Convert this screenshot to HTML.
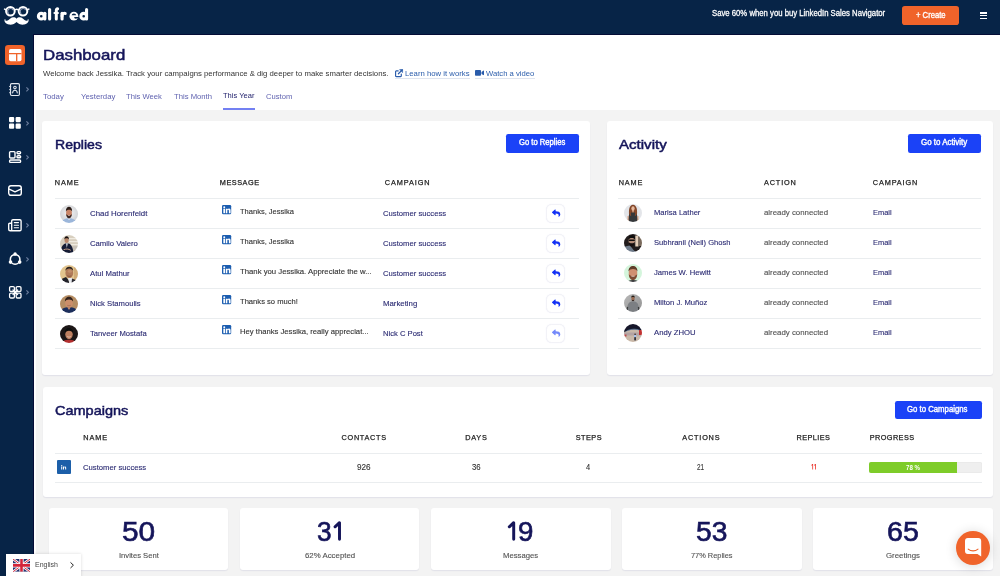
<!DOCTYPE html>
<html>
<head>
<meta charset="utf-8">
<title>Dashboard</title>
<style>
*{box-sizing:border-box;margin:0;padding:0}
html,body{width:1000px;height:576px;overflow:hidden}
body{font-family:"Liberation Sans",sans-serif;background:#f3f3f3;position:relative;color:#333}
.abs{position:absolute}
svg{position:absolute;overflow:visible}
.t{position:absolute;white-space:nowrap;line-height:1;transform-origin:0 50%}
#topbar{left:0;top:0;width:1000px;height:35px;background:#072447}
#sidebar{left:0;top:0;width:34px;height:576px;background:#072447}
#head{left:34px;top:35px;width:966px;height:74.8px;background:#fff}
.card{position:absolute;background:#fff;border-radius:3px;box-shadow:0 1px 1.2px rgba(90,90,160,.12)}
.btn{position:absolute;background:#1b42f7;border-radius:2.2px}
.ln{position:absolute;height:1px;background:#eaedef}
.rb{position:absolute;width:18.5px;height:18.9px;border:1px solid #f2f2f7;border-radius:5.5px;background:#fff;box-shadow:0 0 1px rgba(80,90,200,.10)}
.ul{position:absolute;height:1px;background:#dfe5f0}
</style>
</head>
<body>
<div id="head" class="abs"></div>
<div class="abs" style="left:34px;top:35px;width:2px;height:541px;background:#fdfdfd"></div>
<div id="topbar" class="abs"></div>
<div id="sidebar" class="abs"></div>

<div class="abs" style="left:33.2px;top:34.100px;width:967px;height:.9px;background:#040c36"></div>
<div class="abs" style="left:33.200px;top:34.100px;width:.9px;height:542px;background:#040c36"></div>
<svg style="left:0;top:0" width="100" height="35" viewBox="0 0 100 35">
<g fill="none" stroke="#fff" stroke-width="2">
<circle cx="10.4" cy="11.2" r="4.300"/><circle cx="23" cy="11.2" r="4.300"/>
<path d="M15.1 10c.9-.8 2.300-.8 3.200 0" stroke-width="1.5"/>
<path d="M6 9.800L4.600 9.100M27.400 9.800L28.800 9.100" stroke-width="1.6" stroke-linecap="round"/>
</g>
<g fill="none" stroke="#8d9cb5" stroke-width="1.200" stroke-linecap="round"><path d="M8.300 13.300a2.900 2.900 0 1 1 4.600-3.700"/><path d="M20.900 13.300a2.900 2.900 0 1 1 4.600-3.700"/></g>
<path fill="#fff" d="M16.550 18.700c-1.500-1.700-4.400-1.800-6.200-.2-1.300 1.200-2.300 2.300-3.700 2.300-1 0-1.500-.6-1.300-1.300.1-.4-.4-.6-.6-.2-1 2.200 1 4.800 4.300 5.300 3 .4 5.900-.9 7.500-2.700 1.600 1.800 4.500 3.100 7.500 2.700 3.300-.5 5.300-3.100 4.300-5.300-.2-.4-.7-.2-.6.200.2.700-.3 1.300-1.300 1.300-1.400 0-2.400-1.100-3.700-2.300-1.800-1.600-4.700-1.500-6.200.200z"/>
<g fill="none" stroke="#fff" stroke-width="3.1" stroke-linecap="round" stroke-linejoin="round">
<circle cx="41.250" cy="16.200" r="2.850"/><path d="M44.850 13.300V19.050"/>
<path d="M49.600 9.550V19.050"/>
<path d="M56.300 19.050V10.800c0-1.500.700-2.150 1.350-2.150" stroke-width="3"/><path d="M54.500 13H57.900" stroke-width="2.200"/>
<path d="M62.050 13.300V19.050"/><path d="M62.050 15.900c0-1.800 1.400-2.800 3.200-2.500" stroke-width="3"/>
<circle cx="73.900" cy="16.150" r="4.450" fill="#fff" stroke="none"/><path d="M71.700 15.300a2.200 1.900 0 0 1 4.400 0z" fill="#072447" stroke="none"/><path d="M74.300 17.100H78.800V18.600L76.700 18.500Q75.200 18.900 74.300 18.100z" fill="#072447" stroke="none"/>
<circle cx="83.700" cy="16.200" r="2.850"/><path d="M86.550 9.550V19.050"/>
</g></svg>
<div class="abs" style="left:5px;top:45.300px;width:19.8px;height:19.500px;border-radius:3.200px;background:#f0632a"></div>
<svg style="left:8.7px;top:49px" width="12.5" height="12.3" viewBox="0 0 12.5 12.300"><rect width="12.5" height="12.300" rx="1.7" fill="#fff"/><path d="M0 4.700H12.5M7.700 4.700V12.300" stroke="#f0632a" stroke-width="1.300"/></svg>
<svg style="left:9px;top:82.700px" width="12" height="13.2" viewBox="0 0 12 13.2" fill="none" stroke="#e3e7ee" stroke-width="1.150" stroke-linecap="round" stroke-linejoin="round"><rect x="1.500" y=".6" width="8.900" height="11.900" rx="1.200"/><path d="M.5 3.500H1.800M.5 6.600H1.800M.5 9.700H1.800" stroke-width=".9"/><circle cx="5.950" cy="4.600" r="1.300" stroke-width="1.050"/><path d="M3.600 9.900c.200-1.700 1.100-2.600 2.350-2.600s2.150.9 2.350 2.600" stroke-width="1.050"/></svg>
<svg style="left:26px;top:86.7px" width="2.8" height="4.6" viewBox="0 0 2.8 4.6" fill="none" stroke="#6a7c9c" stroke-width="1.150"><path d="M.4 .3L2.4 2.3L.4 4.300"/></svg>
<svg style="left:9px;top:117.2px" width="11.800" height="11.800" viewBox="0 0 11.800 11.800" fill="#fff"><rect width="5.200" height="5.200" rx="1.100"/><rect x="6.600" width="5.200" height="5.200" rx="1.100"/><rect y="6.600" width="5.200" height="5.200" rx="1.100"/><rect x="6.600" y="6.600" width="5.200" height="5.200" rx="1.100"/></svg>
<svg style="left:26px;top:120.7px" width="2.8" height="4.6" viewBox="0 0 2.8 4.6" fill="none" stroke="#6a7c9c" stroke-width="1.150"><path d="M.4 .3L2.4 2.3L.4 4.300"/></svg>
<svg style="left:9px;top:151px" width="12.200" height="12" viewBox="0 0 12.200 12" fill="none" stroke="#fff" stroke-linecap="round" stroke-linejoin="round" stroke-width="1.400"><rect x=".6" y=".6" width="5.400" height="6.400" rx=".9"/><rect x="8" y=".6" width="3.600" height="2.100" rx=".9"/><rect x="8" y="4.700" width="3.600" height="2.100" rx=".9"/><rect x=".6" y="9" width="11" height="2.400" rx=".9"/></svg>
<svg style="left:26px;top:154.7px" width="2.8" height="4.6" viewBox="0 0 2.8 4.6" fill="none" stroke="#6a7c9c" stroke-width="1.150"><path d="M.4 .3L2.4 2.3L.4 4.300"/></svg>
<svg style="left:7.800px;top:185.400px" width="14" height="11" viewBox="0 0 14 11" fill="none" stroke="#fff" stroke-linecap="round" stroke-linejoin="round" stroke-width="1.400"><rect x=".7" y=".7" width="12.600" height="9.600" rx="2.200"/><path d="M1.200 4.200L7 6.800L12.800 4.200"/></svg>
<svg style="left:7.800px;top:218.600px" width="13.800" height="12.500" viewBox="0 0 13.800 12.500" fill="none" stroke="#fff" stroke-linecap="round" stroke-linejoin="round" stroke-width="1.350"><path d="M3.700 11.800V2a1.300 1.300 0 0 1 1.300-1.300H11.800a1.300 1.300 0 0 1 1.300 1.300V10.500a1.300 1.300 0 0 1-1.300 1.300H2.200a1.500 1.500 0 0 1-1.500-1.500V5.200a1 1 0 0 1 1-1H3.700"/><path d="M6.300 3.600H10.500M6.300 6.200H10.500M6.300 8.800H10.500" stroke-width="1.100"/></svg>
<svg style="left:26px;top:222.7px" width="2.8" height="4.6" viewBox="0 0 2.8 4.6" fill="none" stroke="#6a7c9c" stroke-width="1.150"><path d="M.4 .3L2.4 2.3L.4 4.300"/></svg>
<svg style="left:8px;top:252.300px" width="13.600" height="13" viewBox="0 0 13.600 13"><circle cx="7.100" cy="7.400" r="4.800" fill="none" stroke="#fff" stroke-width="1.600"/><g fill="#fff"><circle cx="7.100" cy="2" r="1.700"/><circle cx="2.500" cy="10.100" r="1.800"/><circle cx="11.700" cy="10.100" r="1.800"/></g></svg>
<svg style="left:26px;top:256.7px" width="2.8" height="4.6" viewBox="0 0 2.8 4.6" fill="none" stroke="#6a7c9c" stroke-width="1.150"><path d="M.4 .3L2.4 2.3L.4 4.300"/></svg>
<svg style="left:8.700px;top:286.200px" width="12.600" height="12.600" viewBox="0 0 12.600 12.600" fill="none" stroke="#fff" stroke-linecap="round" stroke-linejoin="round" stroke-width="1.300"><rect x=".6" y=".6" width="4.800" height="4.800" rx="1.200"/><rect x="7.200" y=".6" width="4.800" height="4.800" rx="1.200"/><rect x=".6" y="7.200" width="4.800" height="4.800" rx="1.200"/><rect x="7.200" y="7.200" width="4.800" height="4.800" rx="1.200"/><path d="M4 4L8.600 8.600M8.600 4L4 8.600" stroke-width="1.300"/><circle cx="6.300" cy="6.300" r="1.300" fill="#fff" stroke="none"/></svg>
<svg style="left:26px;top:290.2px" width="2.8" height="4.6" viewBox="0 0 2.8 4.6" fill="none" stroke="#6a7c9c" stroke-width="1.150"><path d="M.4 .3L2.4 2.3L.4 4.300"/></svg>

<!-- tab underline -->
<div class="abs" style="left:223px;top:107.6px;width:31.8px;height:2px;background:#7380f2"></div>
<!-- link underlines -->
<div class="ul" style="left:394.7px;top:78.2px;width:75px"></div>
<div class="ul" style="left:475.3px;top:78.2px;width:59.8px"></div>
<svg style="left:394.6px;top:69.2px" width="8.2" height="8.2" viewBox="0 0 8.2 8.2" fill="none" stroke="#2a5cab" stroke-width="1.150" stroke-linecap="round" stroke-linejoin="round"><path d="M6.300 5V6.900a.7.7 0 0 1-.7.7H1.300a.7.7 0 0 1-.7-.7V2.600a.7.7 0 0 1 .7-.7H3.200"/><path d="M3.400 4.800L7.300 .9" stroke-width="1.250"/><path d="M4.900 .6H7.600V3.300z" fill="#2a5cab" stroke-width=".6"/></svg>
<svg style="left:475.3px;top:70.300px" width="9" height="5.800" viewBox="0 0 9 5.800"><rect x="0" y="0" width="6" height="5.800" rx=".8" fill="#2a5cab"/><path d="M6.500 1.900L8.300 .7c.3-.2.700 0 .700.350v3.700c0 .350-.400.550-.700.350L6.500 3.900z" fill="#2a5cab"/></svg>

<!-- top right -->
<div class="abs" style="left:902.2px;top:6px;width:56.9px;height:18.7px;background:#f0632a;border-radius:2.8px"></div>
<div class="abs" style="left:979.8px;top:11.700px;width:7.5px;height:1.9px;background:#fff"></div>
<div class="abs" style="left:979.8px;top:14.600px;width:7.5px;height:1.9px;background:#fff"></div>
<div class="abs" style="left:979.8px;top:17.500px;width:7.5px;height:1.9px;background:#fff"></div>

<!-- cards -->
<div class="card" style="left:42.3px;top:121px;width:548.2px;height:254px"></div>
<div class="card" style="left:606.8px;top:121px;width:386.2px;height:254px"></div>
<div class="card" style="left:42.5px;top:387px;width:950.5px;height:110px"></div>
<div class="card" style="left:49px;top:508px;width:179.3px;height:62px"></div>
<div class="card" style="left:240px;top:508px;width:179.2px;height:62px"></div>
<div class="card" style="left:431.2px;top:508px;width:179.4px;height:62px"></div>
<div class="card" style="left:622px;top:508px;width:179.8px;height:62px"></div>
<div class="card" style="left:813.3px;top:508px;width:179.7px;height:62px"></div>

<!-- buttons -->
<div class="btn" style="left:505.5px;top:134.2px;width:73px;height:18.4px"></div>
<div class="btn" style="left:908.4px;top:134.2px;width:73px;height:18.4px"></div>
<div class="btn" style="left:894.6px;top:400.6px;width:87px;height:18.4px"></div>

<!-- table lines -->
<div class="ln" style="left:54.5px;top:198px;width:524px"></div>
<div class="ln" style="left:618.3px;top:197.7px;width:363px"></div>
<div class="ln" style="left:54.5px;top:228px;width:524px"></div>
<div class="ln" style="left:618.3px;top:227.7px;width:363px"></div>
<div class="ln" style="left:54.5px;top:258px;width:524px"></div>
<div class="ln" style="left:618.3px;top:257.7px;width:363px"></div>
<div class="ln" style="left:54.5px;top:288px;width:524px"></div>
<div class="ln" style="left:618.3px;top:287.7px;width:363px"></div>
<div class="ln" style="left:54.5px;top:318px;width:524px"></div>
<div class="ln" style="left:618.3px;top:317.7px;width:363px"></div>
<div class="ln" style="left:54.5px;top:348px;width:524px"></div>
<div class="ln" style="left:618.3px;top:347.7px;width:363px"></div>
<div class="ln" style="left:54.5px;top:452.5px;width:927px"></div>
<div class="ln" style="left:54.5px;top:482.2px;width:927px"></div>

<!-- progress -->
<div class="abs" style="left:869.3px;top:462.1px;width:112.3px;height:11.2px;background:#efefef;border-radius:2px;overflow:hidden;box-shadow:inset 0 0 0 .5px #e6e6e6"><div style="width:87.6px;height:100%;background:#7ecc29"></div></div>

<svg style="left:810.500px;top:464.200px" width="5.400" height="5.600" viewBox="0 0 5.400 5.600" fill="#ea332b"><path d="M1.300 0H2.100V5.600H1.300V1.150L.400 1.700V1z"/><path d="M4.100 0H4.900V5.600H4.100V1.150L3.200 1.700V1z"/></svg>
<!-- campaign linkedin icon -->
<div class="abs" style="left:57px;top:460px;width:14.2px;height:14px;background:#1c5fa9;border-radius:1px"></div>
<svg style="left:61.3px;top:464.700px" width="5.5" height="4.700" viewBox="0 0 7 6"><g fill="#fff"><circle cx="0.9" cy="0.8" r="0.8"/><rect x="0.25" y="2" width="1.3" height="3.8"/><path d="M2.5 2h1.25v.55c.25-.4.7-.65 1.3-.65 1.1 0 1.55.7 1.55 1.8v2.1H5.3V3.95c0-.55-.15-.95-.7-.95-.6 0-.8.45-.8.95V5.800H2.5z"/></g></svg>

<svg style="left:221.8px;top:205.4px" width="9.2" height="9.3" viewBox="0 0 9.2 9.3"><rect x="0" y="0" width="9.2" height="9.3" rx="1.2" fill="#1b5db0"/><g fill="#fff"><circle cx="2.250" cy="2.300" r="1"/><rect x="1.350" y="3.700" width="1.800" height="4.500"/><path d="M3.900 3.700h1.700v.6c.3-.45.850-.75 1.500-.75 1.150 0 1.500.8 1.500 2v2.650H6.900V5.800c0-.55-.15-.95-.7-.95-.6 0-.85.450-.85.950v2.400H3.900z"/></g></svg>
<div class="rb" style="left:546.3px;top:203.9px"></div>
<svg style="left:551.5px;top:208.9px" width="8.3" height="8.3" viewBox="0 0 512 512"><path fill="#1230f5" d="M8.309 189.836L184.313 37.851C199.719 24.546 224 35.347 224 56.015v80.053c160.629 1.839 288 34.032 288 186.258 0 61.441-39.581 122.309-83.333 154.132-13.653 9.931-33.111-2.533-28.077-18.631 45.344-145.012-21.507-183.51-176.59-185.742V360c0 20.7-24.3 31.453-39.687 18.164l-176.004-152c-11.071-9.562-11.086-26.753 0-36.328z"/></svg>
<svg style="left:221.8px;top:235.4px" width="9.2" height="9.3" viewBox="0 0 9.2 9.3"><rect x="0" y="0" width="9.2" height="9.3" rx="1.2" fill="#1b5db0"/><g fill="#fff"><circle cx="2.250" cy="2.300" r="1"/><rect x="1.350" y="3.700" width="1.800" height="4.500"/><path d="M3.900 3.700h1.700v.6c.3-.45.850-.75 1.500-.75 1.150 0 1.500.8 1.500 2v2.650H6.900V5.800c0-.55-.15-.95-.7-.95-.6 0-.85.450-.85.950v2.400H3.900z"/></g></svg>
<div class="rb" style="left:546.3px;top:233.9px"></div>
<svg style="left:551.5px;top:238.9px" width="8.3" height="8.3" viewBox="0 0 512 512"><path fill="#1230f5" d="M8.309 189.836L184.313 37.851C199.719 24.546 224 35.347 224 56.015v80.053c160.629 1.839 288 34.032 288 186.258 0 61.441-39.581 122.309-83.333 154.132-13.653 9.931-33.111-2.533-28.077-18.631 45.344-145.012-21.507-183.51-176.59-185.742V360c0 20.7-24.3 31.453-39.687 18.164l-176.004-152c-11.071-9.562-11.086-26.753 0-36.328z"/></svg>
<svg style="left:221.8px;top:265.4px" width="9.2" height="9.3" viewBox="0 0 9.2 9.3"><rect x="0" y="0" width="9.2" height="9.3" rx="1.2" fill="#1b5db0"/><g fill="#fff"><circle cx="2.250" cy="2.300" r="1"/><rect x="1.350" y="3.700" width="1.800" height="4.500"/><path d="M3.900 3.700h1.700v.6c.3-.45.850-.75 1.500-.75 1.150 0 1.500.8 1.500 2v2.650H6.900V5.800c0-.55-.15-.95-.7-.95-.6 0-.85.450-.85.950v2.400H3.900z"/></g></svg>
<div class="rb" style="left:546.3px;top:263.9px"></div>
<svg style="left:551.5px;top:268.9px" width="8.3" height="8.3" viewBox="0 0 512 512"><path fill="#1230f5" d="M8.309 189.836L184.313 37.851C199.719 24.546 224 35.347 224 56.015v80.053c160.629 1.839 288 34.032 288 186.258 0 61.441-39.581 122.309-83.333 154.132-13.653 9.931-33.111-2.533-28.077-18.631 45.344-145.012-21.507-183.51-176.59-185.742V360c0 20.7-24.3 31.453-39.687 18.164l-176.004-152c-11.071-9.562-11.086-26.753 0-36.328z"/></svg>
<svg style="left:221.8px;top:295.4px" width="9.2" height="9.3" viewBox="0 0 9.2 9.3"><rect x="0" y="0" width="9.2" height="9.3" rx="1.2" fill="#1b5db0"/><g fill="#fff"><circle cx="2.250" cy="2.300" r="1"/><rect x="1.350" y="3.700" width="1.800" height="4.500"/><path d="M3.900 3.700h1.700v.6c.3-.45.850-.75 1.500-.75 1.150 0 1.500.8 1.500 2v2.650H6.900V5.800c0-.55-.15-.95-.7-.95-.6 0-.85.450-.85.950v2.400H3.900z"/></g></svg>
<div class="rb" style="left:546.3px;top:293.9px"></div>
<svg style="left:551.5px;top:298.9px" width="8.3" height="8.3" viewBox="0 0 512 512"><path fill="#1230f5" d="M8.309 189.836L184.313 37.851C199.719 24.546 224 35.347 224 56.015v80.053c160.629 1.839 288 34.032 288 186.258 0 61.441-39.581 122.309-83.333 154.132-13.653 9.931-33.111-2.533-28.077-18.631 45.344-145.012-21.507-183.51-176.59-185.742V360c0 20.7-24.3 31.453-39.687 18.164l-176.004-152c-11.071-9.562-11.086-26.753 0-36.328z"/></svg>
<svg style="left:221.8px;top:325.4px" width="9.2" height="9.3" viewBox="0 0 9.2 9.3"><rect x="0" y="0" width="9.2" height="9.3" rx="1.2" fill="#1b5db0"/><g fill="#fff"><circle cx="2.250" cy="2.300" r="1"/><rect x="1.350" y="3.700" width="1.800" height="4.500"/><path d="M3.900 3.700h1.700v.6c.3-.45.850-.75 1.500-.75 1.150 0 1.500.8 1.500 2v2.650H6.900V5.800c0-.55-.15-.95-.7-.95-.6 0-.85.450-.85.950v2.400H3.900z"/></g></svg>
<div class="rb" style="left:546.3px;top:323.9px"></div>
<svg style="left:551.5px;top:328.9px" width="8.3" height="8.3" viewBox="0 0 512 512"><path fill="#7489fa" d="M8.309 189.836L184.313 37.851C199.719 24.546 224 35.347 224 56.015v80.053c160.629 1.839 288 34.032 288 186.258 0 61.441-39.581 122.309-83.333 154.132-13.653 9.931-33.111-2.533-28.077-18.631 45.344-145.012-21.507-183.51-176.59-185.742V360c0 20.7-24.3 31.453-39.687 18.164l-176.004-152c-11.071-9.562-11.086-26.753 0-36.328z"/></svg>
<svg style="left:60px;top:204.5px" width="18" height="18" viewBox="0 0 18 18"><defs><clipPath id="a1"><circle cx="9" cy="9" r="9"/></clipPath><filter id="fa1" x="-10%" y="-10%" width="120%" height="120%"><feGaussianBlur stdDeviation=".45"/></filter></defs><g clip-path="url(#a1)"><g filter="url(#fa1)"><defs><radialGradient id="g1" cx=".5" cy=".45" r=".6"><stop offset="0" stop-color="#f4f4f5"/><stop offset="1" stop-color="#c4c6ca"/></radialGradient></defs><rect x="-2" y="-2" width="22" height="22" fill="url(#g1)"/><path d="M1.500 18.500C2 14.800 5 13.300 9 13.300s7 1.500 7.500 5.200z" fill="#9bb6da"/><path d="M7.600 13.200L9 15.200L10.400 13.200z" fill="#e8eef6"/><ellipse cx="9" cy="7.800" rx="2.900" ry="4.300" fill="#c98466"/><path d="M5.900 6.600C5.300 0 12.700 0 12.100 6.600C11.400 4.200 6.600 4.200 5.900 6.600z" fill="#2a1c18"/><path d="M6.100 8.800C6.200 15 11.800 15 11.900 8.800C11 10.800 7 10.800 6.100 8.800z" fill="#3e2820"/><path d="M7.900 10.500h2.200" stroke="#e9d5cc" stroke-width=".6"/></g></g></svg>
<svg style="left:60px;top:234.5px" width="18" height="18" viewBox="0 0 18 18"><defs><clipPath id="a2"><circle cx="9" cy="9" r="9"/></clipPath><filter id="fa2" x="-10%" y="-10%" width="120%" height="120%"><feGaussianBlur stdDeviation=".45"/></filter></defs><g clip-path="url(#a2)"><g filter="url(#fa2)"><rect x="-2" y="-2" width="22" height="22" fill="#d8cfbf"/><g fill="#efeae0"><rect x="9" y="3" width="10" height="1.200"/><rect x="9" y="6" width="10" height="1.200"/><rect x="9" y="9" width="10" height="1.200"/></g><rect x="12" y="11" width="7" height="8" fill="#c9c2b8"/><path d="M.800 19C.5 12 3 8.500 6.700 8.300S13 11 13.500 19z" fill="#151d34"/><path d="M5.900 8.300L6.800 13L7.900 8.300z" fill="#cfd2d8"/><ellipse cx="6.600" cy="5" rx="2.100" ry="2.900" fill="#b98669"/><path d="M4.400 4.600C4 0 9.300 0 8.900 4.600C8.300 2.800 5 2.800 4.400 4.600z" fill="#17110f"/><path d="M3.500 14.800c2.300-1.100 5-1.100 7.300.5" stroke="#c39a84" stroke-width="1" fill="none"/></g></g></svg>
<svg style="left:60px;top:264.5px" width="18" height="18" viewBox="0 0 18 18"><defs><clipPath id="a3"><circle cx="9" cy="9" r="9"/></clipPath><filter id="fa3" x="-10%" y="-10%" width="120%" height="120%"><feGaussianBlur stdDeviation=".45"/></filter></defs><g clip-path="url(#a3)"><g filter="url(#fa3)"><rect x="-2" y="-2" width="22" height="22" fill="#e2c48e"/><rect x="14" y="-2" width="6" height="22" fill="#d0ab78"/><path d="M0 19L1.500 14L6 12L9 15.500V19z" fill="#242429"/><path d="M8 13L9.500 19H13L12.500 13z" fill="#e9ebef"/><path d="M12 13.500L17 15.500L18 19H11.500z" fill="#2c2c31"/><ellipse cx="9.300" cy="7.900" rx="3.900" ry="5.200" fill="#b07a58"/><ellipse cx="9.800" cy="6.300" rx="2" ry="1.500" fill="#c99472" opacity=".7"/><path d="M5.400 6.200C5 .300 13.600 .300 13.200 6.200C12.200 2.600 6.400 2.600 5.400 6.200z" fill="#2b211d"/><path d="M7.300 10.800c1.300.7 2.700.7 4 0" stroke="#6b4030" stroke-width=".6" fill="none"/></g></g></svg>
<svg style="left:60px;top:294.5px" width="18" height="18" viewBox="0 0 18 18"><defs><clipPath id="a4"><circle cx="9" cy="9" r="9"/></clipPath><filter id="fa4" x="-10%" y="-10%" width="120%" height="120%"><feGaussianBlur stdDeviation=".45"/></filter></defs><g clip-path="url(#a4)"><g filter="url(#fa4)"><rect x="-2" y="-2" width="22" height="22" fill="#b58d63"/><path d="M-1 19C0 14 4 12.300 9 12.300s9 1.700 10 6.700z" fill="#1f2f5b"/><path d="M7.300 12.300L9 15L10.700 12.300z" fill="#c98e6c"/><ellipse cx="9" cy="7.900" rx="3.900" ry="4.900" fill="#cb8e6b"/><path d="M5 6.600C4.300 0 13.700 0 13 6.600C12 3.800 6 3.800 5 6.600z" fill="#33231c"/><path d="M7.300 10.300c1.200.6 2.200.6 3.400 0" stroke="#8a5540" stroke-width=".5" fill="none"/></g></g></svg>
<svg style="left:60px;top:324.5px" width="18" height="18" viewBox="0 0 18 18"><defs><clipPath id="a5"><circle cx="9" cy="9" r="9"/></clipPath><filter id="fa5" x="-10%" y="-10%" width="120%" height="120%"><feGaussianBlur stdDeviation=".45"/></filter></defs><g clip-path="url(#a5)"><g filter="url(#fa5)"><rect x="-2" y="-2" width="22" height="22" fill="#1d1919"/><path d="M1 19C2 15.800 5 14.800 9 14.800s7 1 8 4.200z" fill="#b22d2d"/><ellipse cx="9" cy="9.300" rx="3.700" ry="4.900" fill="#bd7f60"/><path d="M5 8.300C4.300 1.200 13.700 1.200 13 8.300C12.200 4.800 5.800 4.800 5 8.300z" fill="#0b0909"/><path d="M7.300 11.500c1.100.8 2.300.8 3.400 0" stroke="#f0e2da" stroke-width=".6" fill="none"/></g></g></svg>
<svg style="left:624px;top:204px" width="18" height="18" viewBox="0 0 18 18"><defs><clipPath id="b1"><circle cx="9" cy="9" r="9"/></clipPath><filter id="fb1" x="-10%" y="-10%" width="120%" height="120%"><feGaussianBlur stdDeviation=".45"/></filter></defs><g clip-path="url(#b1)"><g filter="url(#fb1)"><rect x="-2" y="-2" width="22" height="22" fill="#e3e5e9"/><path d="M5.200 11.500C4.300 6 5.500 .800 9 .800S13.700 6 12.800 11.500C11.500 12.300 6.500 12.300 5.200 11.500z" fill="#7f4326"/><ellipse cx="9" cy="4.600" rx="1.700" ry="2.400" fill="#e6b89c"/><path d="M3.800 19C3.800 12 5.500 8.300 9 8.300s5.200 3.700 5.200 10.700z" fill="#34373b"/><path d="M8 6.600L9 9.300L10 6.600z" fill="#dfae91"/><path d="M4.100 12V17M13.900 12V17" stroke="#d9a78a" stroke-width="1.200"/><path d="M6.500 5C5.800 8 5.800 10 6.700 11.800M11.500 5C12.200 8 12.200 10 11.300 11.800" stroke="#8a4a2b" stroke-width="1.300" fill="none"/></g></g></svg>
<svg style="left:624px;top:234px" width="18" height="18" viewBox="0 0 18 18"><defs><clipPath id="b2"><circle cx="9" cy="9" r="9"/></clipPath><filter id="fb2" x="-10%" y="-10%" width="120%" height="120%"><feGaussianBlur stdDeviation=".45"/></filter></defs><g clip-path="url(#b2)"><g filter="url(#fb2)"><rect x="-2" y="-2" width="22" height="22" fill="#211f1f"/><rect x="11.300" y="1.500" width="3.200" height="11" fill="#e3cdb8"/><rect x="14.500" y="3" width="4" height="9" fill="#7a6a5c"/><path d="M-1 19L1 12.500L6 11.500L9.500 16L13 19z" fill="#6f7b8b"/><ellipse cx="7.800" cy="7" rx="3.200" ry="4.200" fill="#b48c78"/><path d="M4.500 5.600C4 -.3 11.600 -.3 11.100 5.600C10.200 3.300 5.400 3.300 4.500 5.600z" fill="#0d0b0b"/><path d="M4.700 8C4.800 14 10.800 14 10.900 8C10 9.800 5.600 9.800 4.700 8z" fill="#141010"/><rect x="4.800" y="5.500" width="6" height="1.500" rx=".5" fill="#0d0b0b"/></g></g></svg>
<svg style="left:624px;top:264px" width="18" height="18" viewBox="0 0 18 18"><defs><clipPath id="b3"><circle cx="9" cy="9" r="9"/></clipPath><filter id="fb3" x="-10%" y="-10%" width="120%" height="120%"><feGaussianBlur stdDeviation=".45"/></filter></defs><g clip-path="url(#b3)"><g filter="url(#fb3)"><rect x="-2" y="-2" width="22" height="22" fill="#d4f5dc"/><path d="M2.500 19C3 16.800 5.500 16 9 16s6 .800 6.500 3z" fill="#353537"/><ellipse cx="9" cy="9" rx="4.300" ry="6" fill="#cf9070"/><path d="M4.600 7.500C3.900 0 14.100 0 13.400 7.500C12.300 4.200 5.700 4.200 4.600 7.500z" fill="#5e3c29"/><path d="M4.800 10C4.900 18 13.100 18 13.200 10C12 12.800 6 12.800 4.800 10z" fill="#7c4b31"/><path d="M7.400 12.300h3.200" stroke="#f2e6df" stroke-width=".7"/></g></g></svg>
<svg style="left:624px;top:294px" width="18" height="18" viewBox="0 0 18 18"><defs><clipPath id="b4"><circle cx="9" cy="9" r="9"/></clipPath><filter id="fb4" x="-10%" y="-10%" width="120%" height="120%"><feGaussianBlur stdDeviation=".45"/></filter></defs><g clip-path="url(#b4)"><g filter="url(#fb4)"><defs><linearGradient id="g4" x1="0" y1="0" x2="1" y2="1"><stop offset="0" stop-color="#bcbcbc"/><stop offset="1" stop-color="#8e8e8e"/></linearGradient></defs><rect x="-2" y="-2" width="22" height="22" fill="url(#g4)"/><path d="M3.200 16.500C3 11 4.500 7.500 9 7.300s6 3.700 5.800 9.200L13.500 19H4.500z" fill="#7b7f83"/><path d="M3.600 13L2.800 16.500M14.400 13L15.200 16.500" stroke="#3a3b3d" stroke-width="1.300"/><ellipse cx="9" cy="4.500" rx="1.600" ry="2.400" fill="#9a6a50"/><path d="M7.300 3.800C7 .800 11 .800 10.700 3.800C10.200 2.600 7.800 2.600 7.300 3.800z" fill="#241b17"/><path d="M7.600 5.500C7.700 7.800 10.300 7.800 10.400 5.500C9.800 6.300 8.200 6.300 7.600 5.500z" fill="#3a2a22"/></g></g></svg>
<svg style="left:624px;top:324px" width="18" height="18" viewBox="0 0 18 18"><defs><clipPath id="b5"><circle cx="9" cy="9" r="9"/></clipPath><filter id="fb5" x="-10%" y="-10%" width="120%" height="120%"><feGaussianBlur stdDeviation=".45"/></filter></defs><g clip-path="url(#b5)"><g filter="url(#fb5)"><rect x="-2" y="-2" width="22" height="22" fill="#c9b8a8"/><rect x="-2" y="8.500" width="22" height="3" fill="#b3a3a3"/><path d="M-2 -2H20V8C14 4.500 5 4.500 -2 9.500z" fill="#131929"/><path d="M2 7.500C6 4.800 12 4.500 16 6.500" stroke="#7f9fd0" stroke-width=".8" fill="none" opacity=".7"/><rect x="15" y="6" width="3" height="5" fill="#c23333"/><rect x="-1" y="10.500" width="3.500" height="2" fill="#b94a4a"/><rect x="10" y="11" width="2.200" height="2.300" rx=".5" fill="#a9c5f2"/><rect x="10.300" y="13.200" width="1.600" height="3.200" fill="#1d2230"/><circle cx="11.100" cy="10.300" r=".8" fill="#2a211e"/></g></g></svg>

<svg style="left:0;top:0" width="1000" height="576" viewBox="0 0 1000 576" fill="none" stroke="#15155a" stroke-width="2.950" stroke-linecap="round" stroke-linejoin="round"><path d="M335 526.800L339.500 522.700V539.300"/><path d="M509.300 526.800L513.700 522.700V539.300"/></svg>
<!-- language widget -->
<div class="abs" style="left:6px;top:554px;width:75px;height:24px;background:#fff;box-shadow:0 0 3px rgba(0,0,0,.15)"></div>
<svg style="left:12.7px;top:558.7px" width="17" height="12.8" viewBox="0 0 60 45" preserveAspectRatio="none"><clipPath id="fc"><rect width="60" height="45"/></clipPath><g clip-path="url(#fc)"><rect width="60" height="45" fill="#24316f"/><path d="M0 0L60 45M60 0L0 45" stroke="#fff" stroke-width="9"/><path d="M0 0L60 45M60 0L0 45" stroke="#d3253a" stroke-width="3.5"/><path d="M30 0V45M0 22.5H60" stroke="#fff" stroke-width="15"/><path d="M30 0V45M0 22.5H60" stroke="#d3253a" stroke-width="9"/></g></svg>
<svg style="left:69.6px;top:562px" width="4" height="6.4" viewBox="0 0 4 6.4" fill="none" stroke="#222" stroke-width="1"><path d="M.5 .4L3.4 3.2L.5 6"/></svg>
<!-- texts -->
<div class="abs" style="left:0;top:0;width:1000px;height:576px;will-change:transform;opacity:.999">
<div class="t" style="left:43.35px;top:46.97px;font-size:15px;color:#15155a;-webkit-text-stroke:.5px #15155a;transform:scaleX(1.1207);">Dashboard</div>
<div class="t" style="left:43.10px;top:69.80px;font-size:8px;color:#333;transform:scaleX(0.9693);">Welcome back Jessika. Track your campaigns performance &amp; dig deeper to make smarter decisions.</div>
<div class="t" style="left:404.60px;top:69.80px;font-size:8px;color:#2a5cab;transform:scaleX(0.9685);">Learn how it works</div>
<div class="t" style="left:486.20px;top:69.80px;font-size:8px;color:#2a5cab;transform:scaleX(0.9602);">Watch a video</div>
<div class="t" style="left:43.00px;top:92.80px;font-size:8px;color:#6063b0;transform:scaleX(0.9785);">Today</div>
<div class="t" style="left:80.60px;top:92.80px;font-size:8px;color:#6063b0;transform:scaleX(0.9746);">Yesterday</div>
<div class="t" style="left:126.10px;top:92.80px;font-size:8px;color:#6063b0;transform:scaleX(0.9538);">This Week</div>
<div class="t" style="left:173.60px;top:92.80px;font-size:8px;color:#6063b0;transform:scaleX(0.9601);">This Month</div>
<div class="t" style="left:223.00px;top:91.80px;font-size:8px;color:#23236e;transform:scaleX(0.9413);">This Year</div>
<div class="t" style="left:265.90px;top:92.80px;font-size:8px;color:#6063b0;transform:scaleX(0.9542);">Custom</div>
<div class="t" style="left:712.20px;top:9.37px;font-size:8.7px;color:#fff;-webkit-text-stroke:.3px #fff;transform:scaleX(0.8899);">Save 60% when you buy LinkedIn Sales Navigator</div>
<div class="t" style="left:915.60px;top:11.16px;font-size:8.3px;color:#fff;-webkit-text-stroke:.35px #fff;transform:scaleX(0.9232);">+ Create</div>
<div class="t" style="left:54.60px;top:137.54px;font-size:13.3px;color:#15155a;-webkit-text-stroke:.5px #15155a;transform:scaleX(1.0595);">Replies</div>
<div class="t" style="left:518.60px;top:139.15px;font-size:8.2px;color:#fff;-webkit-text-stroke:.4px #fff;transform:scaleX(0.9323);">Go to Replies</div>
<div class="t" style="left:54.80px;top:179.38px;font-size:7.3px;color:#1e1e1e;-webkit-text-stroke:.25px #1e1e1e;letter-spacing:0.885px;">NAME</div>
<div class="t" style="left:219.80px;top:179.38px;font-size:7.3px;color:#1e1e1e;-webkit-text-stroke:.25px #1e1e1e;letter-spacing:0.526px;">MESSAGE</div>
<div class="t" style="left:384.80px;top:179.38px;font-size:7.3px;color:#1e1e1e;-webkit-text-stroke:.25px #1e1e1e;letter-spacing:0.908px;">CAMPAIGN</div>
<div class="t" style="left:89.50px;top:209.60px;font-size:8px;color:#2b2b73;-webkit-text-stroke:.12px #2b2b73;transform:scaleX(0.9851);">Chad Horenfeldt</div>
<div class="t" style="left:239.50px;top:208.30px;font-size:8px;color:#333;-webkit-text-stroke:.12px #333;transform:scaleX(0.9397);">Thanks, Jessika</div>
<div class="t" style="left:382.70px;top:209.55px;font-size:8px;color:#2b2b73;-webkit-text-stroke:.12px #2b2b73;transform:scaleX(0.9590);">Customer success</div>
<div class="t" style="left:89.50px;top:239.60px;font-size:8px;color:#2b2b73;-webkit-text-stroke:.12px #2b2b73;transform:scaleX(0.9646);">Camilo Valero</div>
<div class="t" style="left:239.50px;top:238.30px;font-size:8px;color:#333;-webkit-text-stroke:.12px #333;transform:scaleX(0.9397);">Thanks, Jessika</div>
<div class="t" style="left:382.70px;top:239.55px;font-size:8px;color:#2b2b73;-webkit-text-stroke:.12px #2b2b73;transform:scaleX(0.9590);">Customer success</div>
<div class="t" style="left:89.50px;top:269.60px;font-size:8px;color:#2b2b73;-webkit-text-stroke:.12px #2b2b73;transform:scaleX(0.9693);">Atul Mathur</div>
<div class="t" style="left:239.50px;top:268.30px;font-size:8px;color:#333;-webkit-text-stroke:.12px #333;transform:scaleX(0.9675);">Thank you Jessika. Appreciate the w...</div>
<div class="t" style="left:382.70px;top:269.55px;font-size:8px;color:#2b2b73;-webkit-text-stroke:.12px #2b2b73;transform:scaleX(0.9590);">Customer success</div>
<div class="t" style="left:89.50px;top:299.60px;font-size:8px;color:#2b2b73;-webkit-text-stroke:.12px #2b2b73;transform:scaleX(0.9574);">Nick Stamoulis</div>
<div class="t" style="left:239.50px;top:298.30px;font-size:8px;color:#333;-webkit-text-stroke:.12px #333;transform:scaleX(0.9504);">Thanks so much!</div>
<div class="t" style="left:382.70px;top:299.55px;font-size:8px;color:#2b2b73;-webkit-text-stroke:.12px #2b2b73;transform:scaleX(0.9765);">Marketing</div>
<div class="t" style="left:89.50px;top:329.60px;font-size:8px;color:#2b2b73;-webkit-text-stroke:.12px #2b2b73;transform:scaleX(0.9579);">Tanveer Mostafa</div>
<div class="t" style="left:239.50px;top:328.30px;font-size:8px;color:#333;-webkit-text-stroke:.12px #333;transform:scaleX(0.9581);">Hey thanks Jessika, really appreciat...</div>
<div class="t" style="left:382.70px;top:329.55px;font-size:8px;color:#2b2b73;-webkit-text-stroke:.12px #2b2b73;transform:scaleX(0.9522);">Nick C Post</div>
<div class="t" style="left:618.90px;top:137.54px;font-size:13.3px;color:#15155a;-webkit-text-stroke:.5px #15155a;transform:scaleX(1.1323);">Activity</div>
<div class="t" style="left:921.35px;top:139.15px;font-size:8.2px;color:#fff;-webkit-text-stroke:.4px #fff;transform:scaleX(0.9680);">Go to Activity</div>
<div class="t" style="left:618.80px;top:179.08px;font-size:7.3px;color:#1e1e1e;-webkit-text-stroke:.25px #1e1e1e;letter-spacing:0.802px;">NAME</div>
<div class="t" style="left:764.05px;top:179.08px;font-size:7.3px;color:#1e1e1e;-webkit-text-stroke:.25px #1e1e1e;letter-spacing:0.834px;">ACTION</div>
<div class="t" style="left:872.80px;top:179.08px;font-size:7.3px;color:#1e1e1e;-webkit-text-stroke:.25px #1e1e1e;letter-spacing:0.873px;">CAMPAIGN</div>
<div class="t" style="left:653.50px;top:208.60px;font-size:8px;color:#2b2b73;-webkit-text-stroke:.12px #2b2b73;transform:scaleX(0.9485);">Marisa Lather</div>
<div class="t" style="left:763.80px;top:209.00px;font-size:8px;color:#525252;-webkit-text-stroke:.12px #525252;transform:scaleX(0.9803);">already connected</div>
<div class="t" style="left:872.50px;top:209.00px;font-size:8px;color:#2b2b73;-webkit-text-stroke:.12px #2b2b73;transform:scaleX(0.9293);">Email</div>
<div class="t" style="left:653.50px;top:238.60px;font-size:8px;color:#2b2b73;-webkit-text-stroke:.12px #2b2b73;transform:scaleX(0.9439);">Subhranil (Neil) Ghosh</div>
<div class="t" style="left:763.80px;top:239.00px;font-size:8px;color:#525252;-webkit-text-stroke:.12px #525252;transform:scaleX(0.9803);">already connected</div>
<div class="t" style="left:872.50px;top:239.00px;font-size:8px;color:#2b2b73;-webkit-text-stroke:.12px #2b2b73;transform:scaleX(0.9293);">Email</div>
<div class="t" style="left:653.50px;top:268.60px;font-size:8px;color:#2b2b73;-webkit-text-stroke:.12px #2b2b73;transform:scaleX(0.9550);">James W. Hewitt</div>
<div class="t" style="left:763.80px;top:269.00px;font-size:8px;color:#525252;-webkit-text-stroke:.12px #525252;transform:scaleX(0.9803);">already connected</div>
<div class="t" style="left:872.50px;top:269.00px;font-size:8px;color:#2b2b73;-webkit-text-stroke:.12px #2b2b73;transform:scaleX(0.9293);">Email</div>
<div class="t" style="left:653.50px;top:298.60px;font-size:8px;color:#2b2b73;-webkit-text-stroke:.12px #2b2b73;transform:scaleX(0.9530);">Milton J. Muñoz</div>
<div class="t" style="left:763.80px;top:299.00px;font-size:8px;color:#525252;-webkit-text-stroke:.12px #525252;transform:scaleX(0.9803);">already connected</div>
<div class="t" style="left:872.50px;top:299.00px;font-size:8px;color:#2b2b73;-webkit-text-stroke:.12px #2b2b73;transform:scaleX(0.9293);">Email</div>
<div class="t" style="left:653.50px;top:328.60px;font-size:8px;color:#2b2b73;-webkit-text-stroke:.12px #2b2b73;transform:scaleX(0.9658);">Andy ZHOU</div>
<div class="t" style="left:763.80px;top:329.00px;font-size:8px;color:#525252;-webkit-text-stroke:.12px #525252;transform:scaleX(0.9803);">already connected</div>
<div class="t" style="left:872.50px;top:329.00px;font-size:8px;color:#2b2b73;-webkit-text-stroke:.12px #2b2b73;transform:scaleX(0.9293);">Email</div>
<div class="t" style="left:54.60px;top:403.59px;font-size:13.3px;color:#15155a;-webkit-text-stroke:.5px #15155a;transform:scaleX(1.0897);">Campaigns</div>
<div class="t" style="left:907.35px;top:405.65px;font-size:8.2px;color:#fff;-webkit-text-stroke:.4px #fff;transform:scaleX(0.9495);">Go to Campaigns</div>
<div class="t" style="left:83.30px;top:433.88px;font-size:7.3px;color:#1e1e1e;-webkit-text-stroke:.25px #1e1e1e;letter-spacing:0.885px;">NAME</div>
<div class="t" style="left:341.55px;top:433.88px;font-size:7.3px;color:#1e1e1e;-webkit-text-stroke:.25px #1e1e1e;letter-spacing:0.701px;">CONTACTS</div>
<div class="t" style="left:465.30px;top:433.88px;font-size:7.3px;color:#1e1e1e;-webkit-text-stroke:.25px #1e1e1e;letter-spacing:0.719px;">DAYS</div>
<div class="t" style="left:575.80px;top:433.88px;font-size:7.3px;color:#1e1e1e;-webkit-text-stroke:.25px #1e1e1e;letter-spacing:0.453px;">STEPS</div>
<div class="t" style="left:682.30px;top:433.88px;font-size:7.3px;color:#1e1e1e;-webkit-text-stroke:.25px #1e1e1e;letter-spacing:0.802px;">ACTIONS</div>
<div class="t" style="left:796.55px;top:433.88px;font-size:7.3px;color:#1e1e1e;-webkit-text-stroke:.25px #1e1e1e;letter-spacing:0.404px;">REPLIES</div>
<div class="t" style="left:869.80px;top:433.88px;font-size:7.3px;color:#1e1e1e;-webkit-text-stroke:.25px #1e1e1e;letter-spacing:0.413px;">PROGRESS</div>
<div class="t" style="left:82.90px;top:463.70px;font-size:8px;color:#2b2b73;-webkit-text-stroke:.12px #2b2b73;transform:scaleX(0.9605);">Customer success</div>
<div class="t" style="left:356.75px;top:463.40px;font-size:8.3px;color:#333;-webkit-text-stroke:.12px #333;transform:scaleX(0.9860);">926</div>
<div class="t" style="left:471.75px;top:463.40px;font-size:8.3px;color:#333;-webkit-text-stroke:.12px #333;transform:scaleX(0.9367);">36</div>
<div class="t" style="left:586.25px;top:463.40px;font-size:8.3px;color:#333;-webkit-text-stroke:.12px #333;transform:scaleX(0.8973);">4</div>
<div class="t" style="left:697.25px;top:463.40px;font-size:8.3px;color:#333;-webkit-text-stroke:.12px #333;transform:scaleX(0.7743);">21</div>
<div class="t" style="left:905.85px;top:463.93px;font-size:7.4px;color:#fff;font-weight:bold;transform:scaleX(0.8304);">78 %</div>
<div class="t" style="left:122.30px;top:517.80px;font-size:28px;color:#15155a;-webkit-text-stroke:.65px #15155a;transform:scaleX(1.0656);">50</div>
<div class="t" style="left:119.00px;top:551.80px;font-size:8px;color:#525252;-webkit-text-stroke:.12px #525252;transform:scaleX(0.9519);">Invites Sent</div>
<div class="t" style="left:317.10px;top:517.80px;font-size:28px;color:#15155a;-webkit-text-stroke:.65px #15155a;transform:scaleX(0.9372);">3</div>
<div class="t" style="left:305.00px;top:551.80px;font-size:8px;color:#525252;-webkit-text-stroke:.12px #525252;transform:scaleX(0.9813);">62% Accepted</div>
<div class="t" style="left:517.90px;top:517.80px;font-size:28px;color:#15155a;-webkit-text-stroke:.65px #15155a;transform:scaleX(0.9886);">9</div>
<div class="t" style="left:503.20px;top:551.80px;font-size:8px;color:#525252;-webkit-text-stroke:.12px #525252;transform:scaleX(0.9625);">Messages</div>
<div class="t" style="left:695.90px;top:517.80px;font-size:28px;color:#15155a;-webkit-text-stroke:.65px #15155a;transform:scaleX(1.0078);">53</div>
<div class="t" style="left:691.10px;top:551.80px;font-size:8px;color:#525252;-webkit-text-stroke:.12px #525252;transform:scaleX(0.9238);">77% Replies</div>
<div class="t" style="left:886.90px;top:517.80px;font-size:28px;color:#15155a;-webkit-text-stroke:.65px #15155a;transform:scaleX(1.0207);">65</div>
<div class="t" style="left:886.00px;top:551.80px;font-size:8px;color:#525252;-webkit-text-stroke:.12px #525252;transform:scaleX(0.9802);">Greetings</div>
<div class="t" style="left:34.60px;top:560.80px;font-size:8px;color:#474747;transform:scaleX(0.8762);">English</div>
</div>

<!-- chat -->
<div class="abs" style="left:956.3px;top:530.6px;width:34px;height:34px;border-radius:50%;background:#f0642b;box-shadow:0 1px 12px rgba(0,0,0,.16)"></div>
<svg style="left:964.6px;top:538.3px" width="16.4" height="18.8" viewBox="0 0 16.4 18.8"><path d="M2.900 0H13.300a2.900 2.900 0 0 1 2.900 2.900V18.500L12.500 16H2.900A2.900 2.900 0 0 1 0 13.100V2.900A2.900 2.900 0 0 1 2.900 0z" fill="#fff"/><path d="M3.2 11.2c2.8 2.3 7 2.3 9.8 0" fill="none" stroke="#f0642b" stroke-width="1.1" stroke-linecap="round"/></svg>
</body>
</html>
